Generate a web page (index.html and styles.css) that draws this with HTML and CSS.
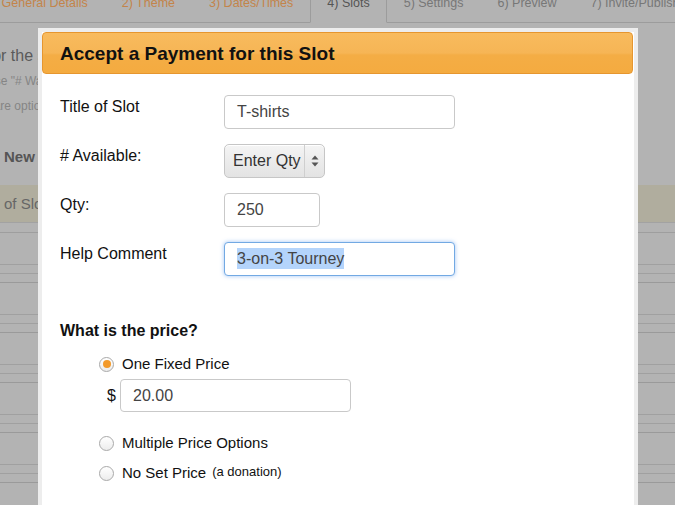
FILE: index.html
```html
<!DOCTYPE html>
<html>
<head>
<meta charset="utf-8">
<link rel="stylesheet" href="styles.css">
</head>
<body>
<div class="page">
  <div class="tabs">
    <div class="tab done">1) General Details</div>
    <div class="tab done">2) Theme</div>
    <div class="tab done">3) Dates/Times</div>
    <div class="tab active">4) Slots</div>
    <div class="tab">5) Settings</div>
    <div class="tab">6) Preview</div>
    <div class="tab">7) Invite/Publish</div>
  </div>
  <div class="bg-content">
    <p class="bg-lead">Sign up for the slots below</p>
    <p class="bg-note bg-note1">Use "# Wanted" to limit signups</p>
    <p class="bg-note bg-note2">These are optional fields</p>
    <p class="bg-new">New Slot</p>
    <div class="bg-table">
      <div class="bg-head">Title of Slot</div>
      <div class="bg-sub"></div>
      <div class="bg-group"><div class="bg-line"></div><div class="bg-line"></div><div class="bg-line"></div></div>
      <div class="bg-group"><div class="bg-line"></div><div class="bg-line"></div><div class="bg-line"></div></div>
      <div class="bg-group"><div class="bg-line"></div><div class="bg-line"></div><div class="bg-line"></div></div>
      <div class="bg-group"><div class="bg-line"></div><div class="bg-line"></div><div class="bg-line"></div></div>
      <div class="bg-group"><div class="bg-line"></div><div class="bg-line"></div><div class="bg-line"></div></div>
    </div>
  </div>
</div>

<div class="modal">
  <div class="modal-header">Accept a Payment for this Slot</div>
  <div class="modal-body">
    <div class="field">
      <div class="label">Title of Slot</div>
      <div class="input wide">T-shirts</div>
    </div>
    <div class="field">
      <div class="label"># Available:</div>
      <div class="select">
        <span class="select-text">Enter Qty</span>
        <span class="select-arrows">
          <svg width="8" height="12" viewBox="0 0 8 12"><path d="M4 0.5 L7.5 4.5 L0.5 4.5 Z" fill="#555"/><path d="M4 11.5 L7.5 7.5 L0.5 7.5 Z" fill="#555"/></svg>
        </span>
      </div>
    </div>
    <div class="field">
      <div class="label">Qty:</div>
      <div class="input qty">250</div>
    </div>
    <div class="field">
      <div class="label">Help Comment</div>
      <div class="input wide focus"><span class="sel">3-on-3 Tourney</span></div>
    </div>

    <div class="price-title">What is the price?</div>
    <div class="radio-row first"><span class="radio checked"></span><span>One Fixed Price</span></div>
    <div class="dollar-row"><span class="dollar">$</span><div class="input price">20.00</div></div>
    <div class="radio-row multi"><span class="radio"></span><span>Multiple Price Options</span></div>
    <div class="radio-row"><span class="radio"></span><span>No Set Price</span><span class="small">(a donation)</span></div>
  </div>
</div>
</body>
</html>
```
FILE: styles.css
```css
html, body {
  margin: 0;
  padding: 0;
}
body {
  width: 675px;
  height: 505px;
  overflow: hidden;
  background: #b3b3b3;
  font-family: "Liberation Sans", Arial, sans-serif;
  position: relative;
}
.page {
  display: flex;
  flex-direction: column;
}
.tabs {
  display: flex;
  height: 32px;
  margin-top: -9px;
  margin-left: -30px;
  border-bottom: 1px solid #9c9c9c;
  box-sizing: border-box;
}
.tab {
  flex: none;
  padding: 0 17px;
  line-height: 24px;
  font-size: 12.5px;
  color: #777;
  white-space: nowrap;
}
.tab.done {
  color: #c3844a;
}
.tab.active {
  color: #555;
  border-left: 1px solid #9c9c9c;
  border-right: 1px solid #9c9c9c;
  border-bottom: 1px solid #b3b3b3;
  margin-bottom: -1px;
  padding: 0 16px;
}
.bg-content {
  display: flex;
  flex-direction: column;
}
.bg-content p {
  margin: 0;
  white-space: nowrap;
}
.bg-lead {
  margin-top: 23px !important;
  margin-left: -71px !important;
  font-size: 16px;
  line-height: 20px;
  color: #5a5a5a;
}
.bg-note {
  font-size: 12px;
  line-height: 16px;
  color: #858585;
}
.bg-note1 {
  margin-top: 7px !important;
  margin-left: -14px !important;
}
.bg-note2 {
  margin-top: 9px !important;
  margin-left: -43px !important;
}
.bg-new {
  margin-top: 33px !important;
  margin-left: 4px !important;
  font-size: 15px;
  line-height: 20px;
  font-weight: bold;
  color: #555;
}
.bg-table {
  margin-top: 18px;
  display: flex;
  flex-direction: column;
}
.bg-head {
  height: 37px;
  line-height: 37px;
  background: #b0ad9e;
  font-size: 15px;
  color: #666;
  text-indent: -28px;
  white-space: nowrap;
  border-bottom: 1px solid #a2a2a2;
}
.bg-sub {
  height: 9px;
  border-bottom: 1px solid #9e9e9e;
}
.bg-group {
  margin-top: 31px;
  display: flex;
  flex-direction: column;
  gap: 8px;
}
.bg-line {
  height: 1px;
  background: #a0a0a0;
}
.bg-line:last-child {
  background: #9a9a9a;
}

/* modal */
.modal {
  position: absolute;
  left: 38px;
  top: 28px;
  width: 600px;
  height: 520px;
  box-sizing: border-box;
  border: 4px solid #ededed;
  background: #fff;
}
.modal-header {
  height: 42px;
  box-sizing: border-box;
  margin-right: 1px;
  border: 1px solid #e6962f;
  border-radius: 4px;
  background: linear-gradient(to bottom, #f8bb5e 0%, #f6b555 50%, #f4ad45 55%, #f4ab40 100%);
  padding-left: 17px;
  padding-top: 2px;
  font-weight: bold;
  font-size: 19px;
  line-height: 38px;
  color: #111;
}
.modal-body {
  padding: 21px 18px 0 18px;
  display: flex;
  flex-direction: column;
}
.field {
  display: flex;
  align-items: flex-start;
  margin-bottom: 15px;
}
.label {
  width: 164px;
  flex: none;
  padding-top: 2px;
  line-height: 20px;
  font-size: 16px;
  color: #111;
}
.input {
  height: 34px;
  box-sizing: border-box;
  border: 1px solid #c9c9c9;
  border-radius: 4px;
  padding-left: 12px;
  font-size: 16px;
  line-height: 32px;
  color: #444;
  background: #fff;
}
.input.wide {
  width: 231px;
}
.input.qty {
  width: 96px;
}
.input.focus {
  border-color: #72a9e3;
  box-shadow: 0 0 4px rgba(82, 150, 236, 0.55);
}
.sel {
  background: #b4d4fb;
  padding: 2px 0;
}
.select {
  width: 101px;
  height: 34px;
  box-sizing: border-box;
  display: flex;
  align-items: stretch;
  border: 1px solid #c6c6c6;
  border-radius: 5px;
  background: linear-gradient(to bottom, #f4f4f4, #e3e3e3);
  box-shadow: inset 0 1px 0 #fff;
  font-size: 16px;
  color: #333;
}
.select-text {
  padding-left: 8px;
  line-height: 32px;
  width: 80px;
  flex: none;
  box-sizing: border-box;
  border-right: 1px solid #cfcfcf;
  white-space: nowrap;
}
.select-arrows {
  flex: 1;
  display: flex;
  align-items: center;
  justify-content: center;
}
.price-title {
  margin-top: 30px;
  font-weight: bold;
  font-size: 16px;
  line-height: 20px;
  color: #111;
}
.radio-row {
  display: flex;
  align-items: center;
  margin-left: 39px;
  font-size: 15px;
  line-height: 20px;
  color: #111;
  margin-top: 10px;
}
.radio-row.first {
  margin-top: 13px;
}
.radio-row.multi {
  margin-top: 21px;
}
.radio {
  width: 15px;
  height: 15px;
  box-sizing: border-box;
  border: 1px solid #a9a9a9;
  border-radius: 50%;
  background: linear-gradient(to bottom, #fff, #ececec);
  margin-right: 8px;
  display: flex;
  align-items: center;
  justify-content: center;
  flex: none;
}
.radio.checked::after {
  content: "";
  width: 8px;
  height: 8px;
  border-radius: 50%;
  background: #f39a2a;
}
.small {
  font-size: 13px;
  margin-left: 6px;
  align-self: flex-start;
  line-height: 17px;
}
.dollar-row {
  display: flex;
  align-items: center;
  margin-left: 47px;
  margin-top: 5px;
}
.dollar {
  font-size: 16px;
  color: #111;
  width: 13px;
}
.input.price {
  width: 231px;
  height: 33px;
  line-height: 31px;
}
```
